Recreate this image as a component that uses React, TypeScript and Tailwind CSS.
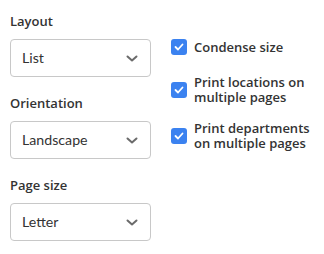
import React from "react";

function Chevron() {
  return (
    <svg width="12" height="7" viewBox="0 0 12 7" fill="none">
      <path d="M1.5 1.5l4.5 4 4.5-4" stroke="#6b6b6b" strokeWidth="2" strokeLinecap="round" strokeLinejoin="round" />
    </svg>
  );
}

function Select({ value }: { value: string }) {
  return (
    <div className="flex h-[38px] w-[141px] items-center justify-between rounded-[4px] border border-[#c8c8c8] bg-white pl-[11px] pr-[12px]">
      <span className="text-[14.2px] leading-[18px] text-[#333]" style={{ fontFamily: "Lato, 'Open Sans', sans-serif" }}>{value}</span>
      <Chevron />
    </div>
  );
}

function Check({ label, className }: { label: React.ReactNode; className?: string }) {
  return (
    <div className={"flex items-center gap-[7px] " + (className ?? "")}>
      <div className="flex h-[16px] w-[16px] shrink-0 items-center justify-center rounded-[3px] bg-[#3b82f0]">
        <svg width="10" height="8" viewBox="0 0 10 8" fill="none">
          <path d="M1.5 4l2.5 2.5 4.5-5" stroke="white" strokeWidth="1.8" strokeLinecap="round" strokeLinejoin="round" />
        </svg>
      </div>
      <div className="text-[13px] font-semibold leading-[15px] text-[#333]">{label}</div>
    </div>
  );
}

export default function App() {
  return (
    <div className="flex gap-[20px] bg-white pl-[10px] pt-[13px]" style={{ fontFamily: "'Open Sans', Lato, sans-serif" }}>
      <div className="flex flex-col">
        <div className="text-[13px] font-semibold leading-[16px] text-[#333]">Layout</div>
        <div className="mt-[10px]"><Select value="List" /></div>
        <div className="mt-[18px] text-[13px] font-semibold leading-[16px] text-[#333]">Orientation</div>
        <div className="mt-[10px]"><Select value="Landscape" /></div>
        <div className="mt-[18px] text-[13px] font-semibold leading-[16px] text-[#333]">Page size</div>
        <div className="mt-[10px]"><Select value="Letter" /></div>
      </div>
      <div className="flex flex-col pt-[26px]">
        <Check label="Condense size" />
        <Check className="mt-[20px]" label={<>Print locations on<br />multiple pages</>} />
        <Check className="mt-[16px]" label={<>Print departments<br />on multiple pages</>} />
      </div>
    </div>
  );
}
